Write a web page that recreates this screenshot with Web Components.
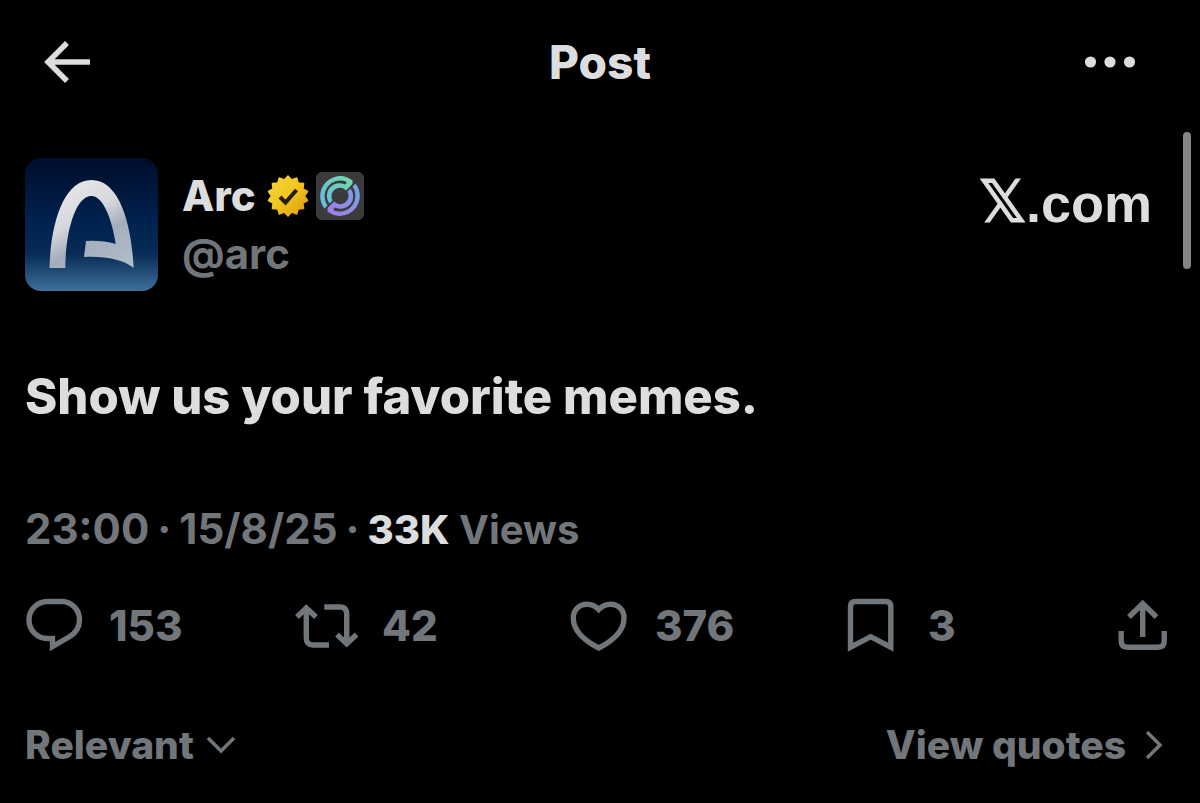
<!DOCTYPE html>
<html lang="en">
<head>
<meta charset="utf-8">
<meta name="viewport" content="width=device-width, initial-scale=1">
<title>Post</title>
<style>
html { background: #000; }
body { margin: 0; background: #000; --bright: #dcddde; --muted: #71767b; color: var(--bright); font: 800 42px/56px Inter, "Liberation Sans", sans-serif; }
</style>
</head>
<body>
<post-page></post-page>
<script>
const define = (name, html, setup) => customElements.define(name, class extends HTMLElement {
  constructor() {
    super();
    const t = document.createElement('template');
    t.innerHTML = '<style>*{box-sizing:border-box}svg{display:block;overflow:visible}button,select{appearance:none;background:none;border:0;margin:0;padding:0;color:inherit;font:inherit;cursor:pointer}a{color:inherit;text-decoration:none}</style>' + html;
    this.attachShadow({ mode: 'open' }).append(t.content.cloneNode(true));
    if (setup) setup.call(this, this.shadowRoot);
  }
});

define('post-header', `<style>
:host { display: block; }
header { display: grid; grid-template-columns: 1fr auto 1fr; align-items: center; height: 124px; padding: 0 44px; }
h1 { margin: 0; font-size: 46px; line-height: 56px; font-weight: 800; }
.more { justify-self: end; padding-right: 20px; }
</style>
<header>
<button aria-label="Back"><svg width="46" height="42" viewBox="0 0 46 42" fill="none" stroke="currentColor" stroke-width="5.5"><path d="M46 21H5M23 2 4 21l19 19"/></svg></button>
<h1><slot></slot></h1>
<button class="more" aria-label="More"><svg width="52" height="12" fill="currentColor"><circle cx="6.500" cy="6" r="5.600"/><circle cx="26" cy="6" r="5.600"/><circle cx="45.500" cy="6" r="5.600"/></svg></button>
</header>`);

define('arc-avatar', `<style>:host { display: block; }</style>
<svg width="133" height="133" viewBox="0 0 133 133" role="img" aria-label="Arc logo">
<defs><linearGradient id="bg" x2="0" y2="1"><stop stop-color="#000c2a"/><stop offset=".45" stop-color="#00214d"/><stop offset=".72" stop-color="#072b56"/><stop offset="1" stop-color="#3e7099"/></linearGradient>
<linearGradient id="fg" x1=".2" x2=".75" y2="1"><stop stop-color="#e8e8ea"/><stop offset=".4" stop-color="#d7d8dc"/><stop offset=".65" stop-color="#a5adbb"/><stop offset="1" stop-color="#aebbc9"/></linearGradient></defs>
<rect width="133" height="133" rx="16" fill="url(#bg)"/>
<path fill="url(#fg)" d="M24.500 110C26 61 40 22 66.500 22C93 22 106 61 108.700 110C97 101 80 98 59 99L61 83Q77 82 90.700 86C87 61 78 38 66.500 38C50 38 40.500 75 40.300 110Z"/>
</svg>`);

define('gold-badge', `<style>:host { display: block; }</style>
<svg width="40" height="42" viewBox="-20 -21 40 42" role="img" aria-label="Verified organisation">
<defs><linearGradient id="g" x2="1" y2="1"><stop stop-color="#f4d43f"/><stop offset=".5" stop-color="#f2c51e"/><stop offset="1" stop-color="#d99a0d"/></linearGradient></defs>
<polygon fill="url(#g)" stroke="url(#g)" stroke-width="1.500" stroke-linejoin="round"/>
<path d="m-8 1 5.500 5.500L8.500-6" fill="none" stroke="#251c05" stroke-width="4"/>
</svg>`, root => {
  const pts = [];
  for (let i = 0; i < 28; i++) {
    const r = i % 2 ? 16.5 : 20, a = Math.PI * i / 14 - Math.PI / 2;
    pts.push((r * Math.cos(a)).toFixed(1) + ',' + (r * Math.sin(a)).toFixed(1));
  }
  root.querySelector('polygon').setAttribute('points', pts.join(' '));
});

define('circle-badge', `<style>:host { display: block; }</style>
<svg width="48" height="48" viewBox="0 0 48 48" role="img" aria-label="Circle affiliate">
<defs><linearGradient id="a" x1="1" y1="0" x2="0" y2="1"><stop stop-color="#72dba4"/><stop offset="1" stop-color="#68b6e6"/></linearGradient><linearGradient id="b" x1="1" y1="0" x2="0" y2="1"><stop stop-color="#6eabe0"/><stop offset="1" stop-color="#a875ef"/></linearGradient></defs>
<rect width="48" height="48" rx="6" fill="#3b3b3d"/>
<path fill="url(#a)" d="M8.500 36.500A20 20 0 0 1 31.500 5.500L36.500 8.200V12L30 18.400A8.500 8.500 0 0 0 16.500 28.500L13.500 31.500A12.500 12.500 0 0 1 29 12.600L30.500 11.200L30 9.500A15.800 15.800 0 0 0 11.500 33.500Z"/>
<path fill="url(#b)" d="M39.500 11.500A20 20 0 0 1 16.500 42.500L11.500 39.800V36L18 29.600A8.500 8.500 0 0 0 31.500 19.500L34.500 16.500A12.500 12.500 0 0 1 19 35.400L17.500 36.800L18 38.500A15.800 15.800 0 0 0 36.500 14.500Z"/>
</svg>`);

define('post-author', `<style>
:host { display: flex; align-items: flex-start; gap: 24px; padding: 34px 23px 0 0; }
.who { flex: 1; padding-top: 10px; }
.name { display: flex; align-items: center; gap: 12px; height: 56px; }
.badges { display: flex; align-items: center; gap: 8px; }
.handle { display: block; color: var(--muted); font-weight: 700; line-height: 60px; }
.site { padding-top: 16px; font-size: 54px; font-weight: 700; font-family: "Liberation Sans", sans-serif; }
.x { font-family: "DejaVu Sans", sans-serif; font-size: 58px; font-weight: 700; line-height: 56px; -webkit-text-stroke: 1px currentColor; }
</style>
<arc-avatar></arc-avatar>
<div class="who"><div class="name"><slot name="name"></slot><span class="badges"><gold-badge></gold-badge><circle-badge></circle-badge></span></div>
<a class="handle" href="#arc"><slot name="handle"></slot></a></div>
<a class="site" href="#x"><span class="x">𝕏</span>.com</a>`);

const ICONS = {
  reply: 'M22.500 5.500H37A18 18 0 0 1 54.500 24C54.500 32 50 37.500 44 41L27.500 50.500V42.500H22.500A18.500 18.500 0 0 1 22.500 5.500Z',
  repost: 'M-1 21 8.300 12 18 21M8.300 12V42Q8.300 49 15 49H31M26.300 11H42Q48.700 11 48.700 18V47M39 38.500 48.700 47.700 58.500 38.500',
  like: 'M27.700 13.500C24 9.500 20 8.200 16 8.200C8 8.200 2.300 14 2.300 22C2.300 35 14 45 27.700 52C41.500 45 53 35 53 22C53 14 47.500 8.200 39.500 8.200C35.500 8.200 31.500 9.500 27.700 13.500Z',
  save: 'M6.500 51.200V10.500Q6.500 5.500 11.500 5.500H41.800Q46.800 5.500 46.800 10.500V51.200L26.700 40.700Z',
  share: 'M4.200 35V45Q4.200 51.200 10.400 51.200H41Q47.200 51.200 47.200 45V35M25.700 41V9M12 21 25.700 7.500 39.500 21'
};
define('post-action', `<style>
:host { display: block; }
button { display: flex; align-items: center; gap: 24px; height: 60px; }
</style>
<button><svg width="60" height="60" viewBox="0 0 60 60" fill="none" stroke="currentColor" stroke-width="5.400"><path/></svg><slot></slot></button>`, function (root) {
  const icon = this.getAttribute('icon'), svg = root.querySelector('svg');
  root.querySelector('path').setAttribute('d', ICONS[icon]);
  root.querySelector('button').setAttribute('aria-label', icon);
  if (icon === 'share') {
    svg.setAttribute('width', '50');
    svg.setAttribute('viewBox', '0 0 50 60');
  }
});

define('post-actions', `<style>
:host { display: grid; grid-template-columns: repeat(4, 1fr) auto; padding: 36px 8px 0 0; color: var(--muted); }
</style><slot></slot>`);

define('post-meta', `<style>
:host { display: flex; align-items: baseline; gap: 8px; padding-top: 72px; color: var(--muted); font-weight: 700; line-height: 60px; white-space: nowrap; }
.views { font-size: 40px; }
b { color: var(--bright); font-weight: 800; }
</style><time>23:00</time> <span>·</span> <time>15/8/25</time> <span>·</span> <span class="views"><b>33K</b> Views</span>`);

define('reply-bar', `<style>
:host { display: flex; justify-content: space-between; align-items: center; padding: 61px 13px 30px 0; color: var(--muted); font-size: 39px; }
label, a { display: flex; align-items: center; }
label { gap: 13px; } a { gap: 20px; }
select { height: 56px; field-sizing: content; opacity: 1; }
svg { fill: none; stroke: currentColor; stroke-width: 3.500; }
</style>
<label><select aria-label="Sort replies"><option>Relevant</option></select><svg width="28" height="16"><path d="m1 1 13 13L27 1"/></svg></label>
<a href="#quotes">View quotes<svg width="16" height="28"><path d="m1 1 13 13L1 27"/></svg></a>`);

define('post-page', `<style>
:host { display: block; position: relative; }
main { padding: 0 25px; }
p { margin: 0; padding-top: 76px; font-size: 49px; line-height: 60px; font-weight: 800; }
.thumb { position: absolute; top: 132px; right: 9px; width: 8px; height: 137px; border-radius: 4px; background: #858585; }
</style>
<post-header>Post</post-header>
<main>
<post-author><span slot="name">Arc</span><span slot="handle">@arc</span></post-author>
<p>Show us your favorite memes.</p>
<post-meta></post-meta>
<post-actions><post-action icon="reply">153</post-action><post-action icon="repost">42</post-action><post-action icon="like">376</post-action><post-action icon="save">3</post-action><post-action icon="share"></post-action></post-actions>
<reply-bar></reply-bar>
</main>
<div class="thumb"></div>`);
</script>
</body>
</html>
